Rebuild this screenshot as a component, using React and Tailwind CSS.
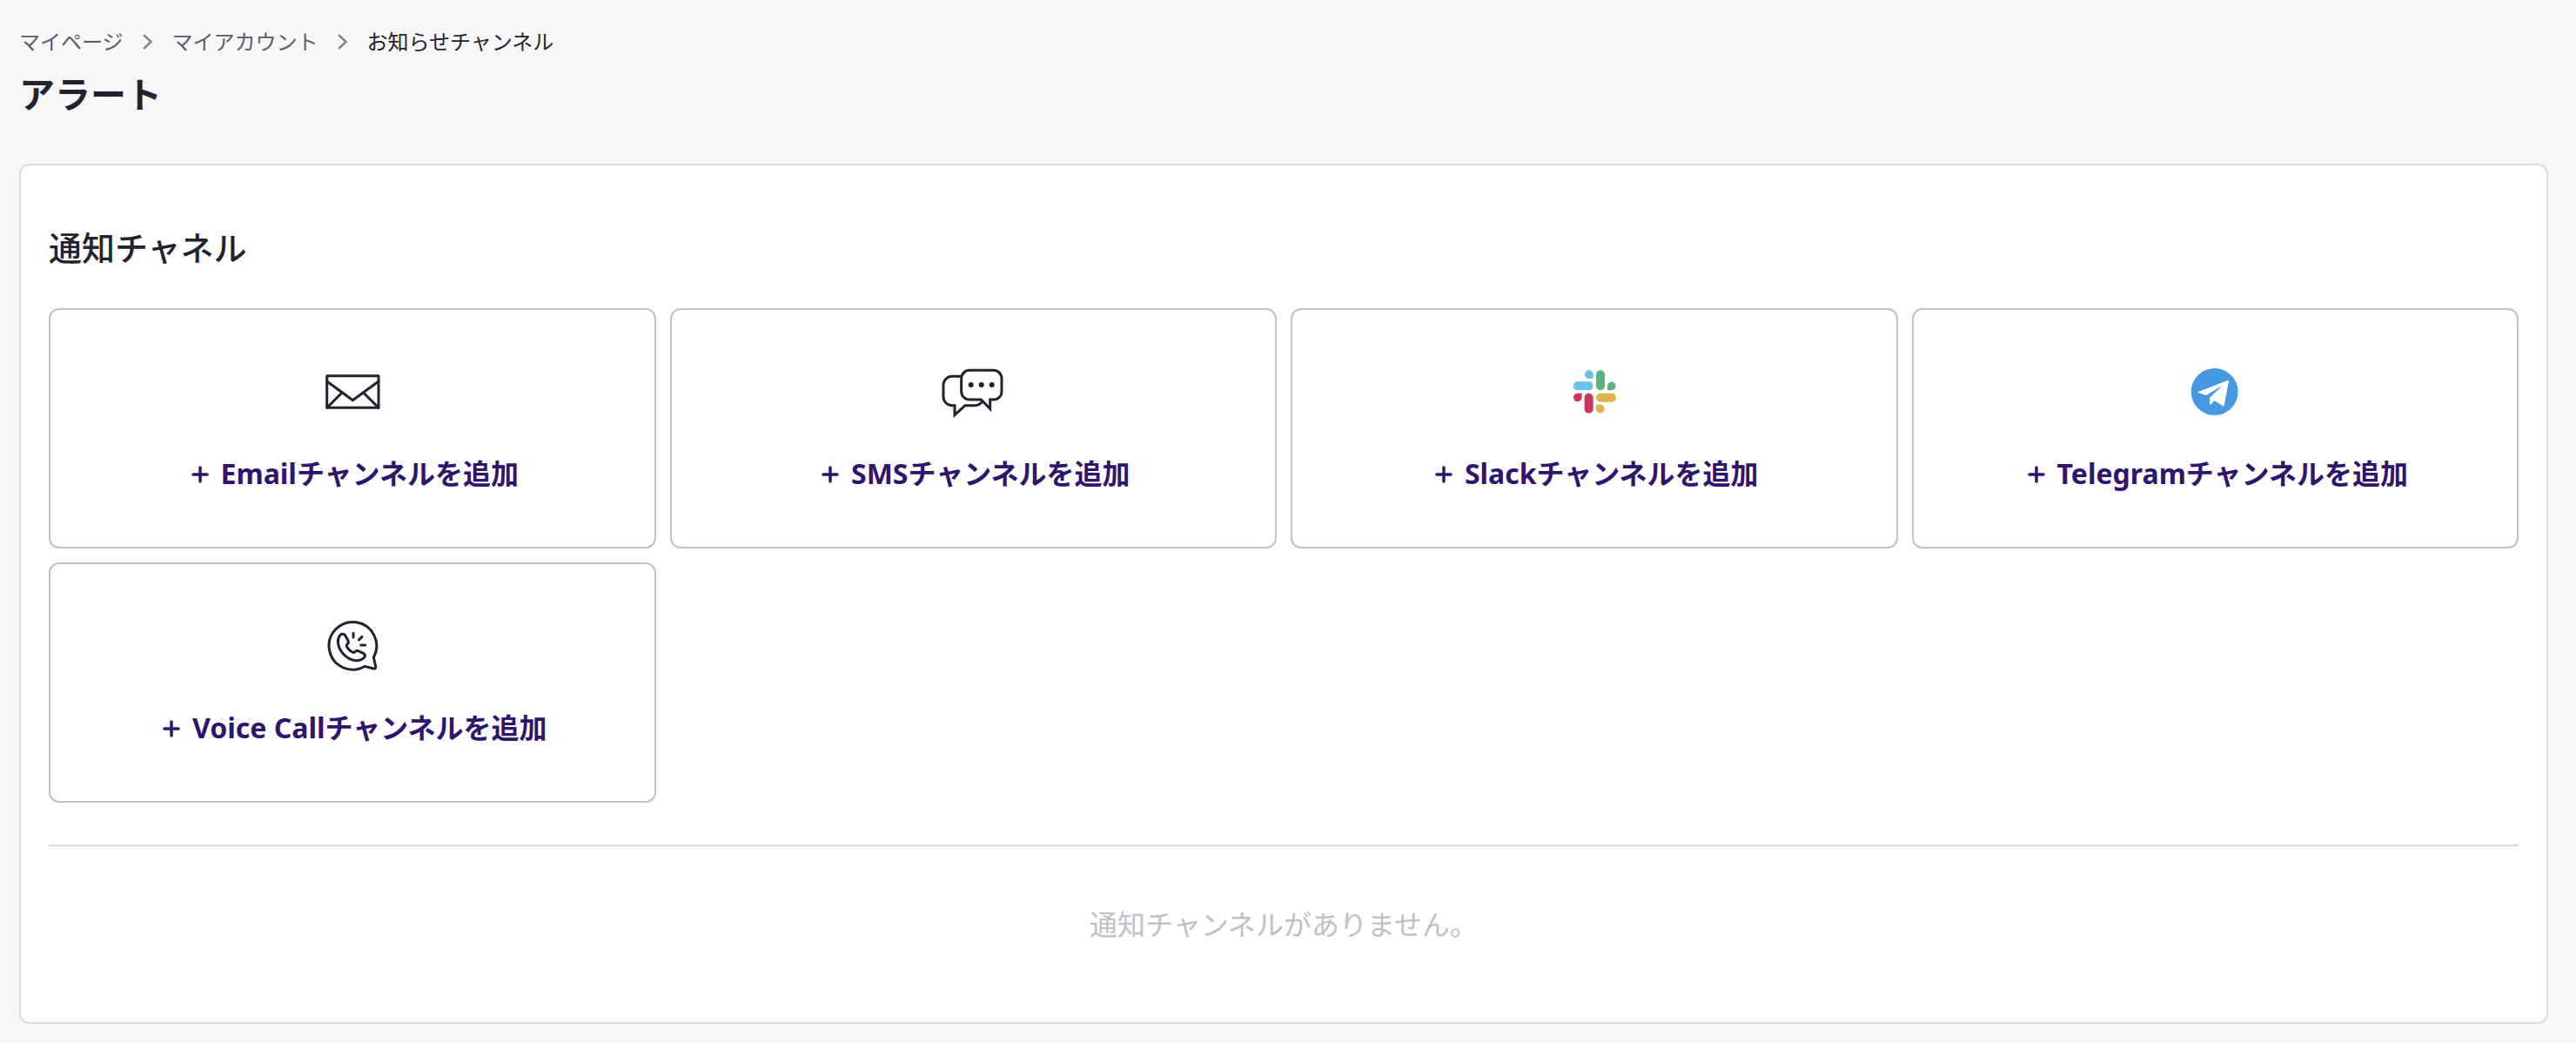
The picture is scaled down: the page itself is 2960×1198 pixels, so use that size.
import React from "react";

const line = {
  fill: "none",
  stroke: "#22232f",
  strokeLinecap: "round",
  strokeLinejoin: "round",
};

function EmailIcon() {
  return (
    <svg viewBox="86 42 216 216" className="size-[72px]" aria-hidden="true" {...line} strokeWidth="9">
      <rect x="106" y="95" width="178" height="110" rx="1" />
      <path d="M106 114L195 179L284 114M158 153L106 205M232 153L284 205" />
    </svg>
  );
}

function SmsIcon() {
  return (
    <svg viewBox="67 42 216 216" className="size-[72px]" aria-hidden="true" {...line} strokeWidth="9">
      <path
        strokeLinejoin="miter"
        d="M163 76H246A28 28 0 0 1 274 104V149A28 28 0 0 1 246 177H234V209L203 177H163A28 28 0 0 1 135 149V104A28 28 0 0 1 163 76Z"
      />
      <path
        strokeLinejoin="miter"
        strokeLinecap="butt"
        d="M135 97H103A30 30 0 0 0 73 127V167A30 30 0 0 0 103 197H112V230L148 197H182Q198 197 207 183"
      />
      <g fill="#22232f" stroke="none">
        <circle cx="168" cy="126" r="9" />
        <circle cx="204" cy="126" r="9" />
        <circle cx="240" cy="126" r="9" />
      </g>
    </svg>
  );
}

function SlackIcon() {
  return (
    <svg viewBox="77 42 216 216" className="size-[72px]" aria-hidden="true">
      <g fill="#67c2ec">
        <path d="M181 105H166A14.500 14.500 0 1 1 181 90.500Z" />
        <rect x="112" y="115" width="69" height="30" rx="15" />
      </g>
      <g fill="#5bb381">
        <rect x="191" y="76" width="30" height="69" rx="15" />
        <path d="M230 145V130A14.500 14.500 0 1 1 245 145Z" />
      </g>
      <g fill="#e0b34c">
        <rect x="191" y="155" width="69" height="30" rx="15" />
        <path d="M191 194H206A14.500 14.500 0 1 1 191 209Z" />
      </g>
      <g fill="#cf355c">
        <rect x="151" y="155" width="30" height="69" rx="15" />
        <path d="M142 155V170A14.500 14.500 0 1 1 127 155Z" />
      </g>
    </svg>
  );
}

function TelegramIcon() {
  return (
    <svg viewBox="88 42 216 216" className="size-[72px]" aria-hidden="true">
      <circle cx="195" cy="150" r="81" fill="#4599e0" />
      <path
        fill="#fff"
        d="M139 150L240 111Q244 110 244 114L228 198Q227 202 223 199L195 181L181 195Q178 197 178 193V171L222 128L166 162L140 154Q136 152 139 150Z"
      />
    </svg>
  );
}

function VoiceCallIcon() {
  return (
    <svg viewBox="86 48 216 216" className="size-[72px]" aria-hidden="true" {...line} strokeWidth="9">
      <path d="M237 226A82 82 0 1 1 267 195L274 227Q275 235 267 234Z" />
      <path d="M152 118Q160 112 168 118L179 138Q182 144 177 149Q172 153 175 159Q182 172 194 177Q200 180 204 175Q208 170 214 173L233 182Q240 187 235 195Q224 207 204 206C172 202 146 172 144 142Q144 126 152 118Z" />
      <path d="M197 112V126M227 124L216 135M223 153H238" />
    </svg>
  );
}

function PlusIcon() {
  return (
    <svg viewBox="0 0 64 64" className="size-8 shrink-0" aria-hidden="true" fill="none" stroke="currentColor" strokeWidth="7" strokeLinecap="round">
      <path d="M32 18V50M16 34H48" />
    </svg>
  );
}

function Separator() {
  return (
    <svg viewBox="0 0 48 48" className="size-6" aria-hidden="true" fill="none" stroke="#858592" strokeWidth="5">
      <path d="M14 8L31 24L14 40" />
    </svg>
  );
}

const channels = [
  { name: "Email", Icon: EmailIcon },
  { name: "SMS", Icon: SmsIcon },
  { name: "Slack", Icon: SlackIcon },
  { name: "Telegram", Icon: TelegramIcon },
  { name: "Voice Call", Icon: VoiceCallIcon },
];

function ChannelCard({ name, Icon }) {
  return (
    <button
      type="button"
      className="flex flex-col items-center gap-[34px] rounded-xl border-2 border-[#c0c0c6] bg-white pt-[58px] pb-[60px]"
    >
      <Icon />
      <span className="flex items-center gap-2 text-[32px] leading-[48px] font-bold text-[#30146e]">
        <PlusIcon />
        <span>{name}チャンネルを追加</span>
      </span>
    </button>
  );
}

export default function App() {
  return (
    <div
      lang="ja"
      className="min-h-screen bg-[#f7f7f7] pt-8 pr-8 pb-[22px] pl-[22px] font-['Noto_Sans','Noto_Sans_CJK_JP',sans-serif] text-[#22232f]"
    >
      <header>
        <nav aria-label="パンくずリスト">
          <ol className="flex items-center gap-4 text-2xl leading-8">
            <li>
              <a href="#mypage" className="text-[#5a5b6a]">マイページ</a>
            </li>
            <li><Separator /></li>
            <li>
              <a href="#account" className="text-[#5a5b6a]">マイアカウント</a>
            </li>
            <li><Separator /></li>
            <li aria-current="page">お知らせチャンネル</li>
          </ol>
        </nav>
        <h1 className="mt-4 text-[41px] leading-[56px] font-bold">アラート</h1>
      </header>

      <main className="mt-[52px] rounded-xl border-2 border-[#dcdddd] bg-white px-8 pt-[66px]">
        <h2 className="text-[38px] leading-[56px] font-medium">通知チャネル</h2>
        <div className="mt-[42px] grid grid-cols-4 gap-4">
          {channels.map((channel) => (
            <ChannelCard key={channel.name} {...channel} />
          ))}
        </div>
        <p className="mt-12 border-t-2 border-[#dcdddd] pt-[66px] pb-[88px] text-center text-[32px] leading-[48px] text-[#c0c0c6]">
          通知チャンネルがありません。
        </p>
      </main>
    </div>
  );
}
